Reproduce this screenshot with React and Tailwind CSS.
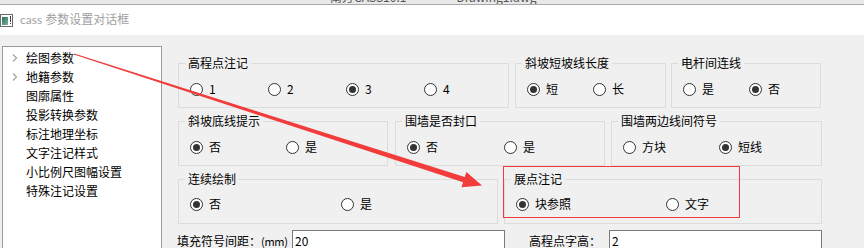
import React from 'react';

function Radio({ label, checked, width }) {
  return (
    <div className="flex items-center h-[16px] shrink-0" style={{ width }}>
      <span className="w-[13px] h-[13px] rounded-full border border-[#333] bg-white flex items-center justify-center shrink-0">
        {checked && <span className="w-[7px] h-[7px] rounded-full bg-[#333]" />}
      </span>
      <span className="ml-[6px] text-[12px] leading-[16px] text-black whitespace-nowrap">{label}</span>
    </div>
  );
}

function Group({ title, width, className = '', pt = 'pt-[10px]', items }) {
  return (
    <fieldset className={`h-[53px] border border-[#dcdcdc] shrink-0 ${className}`} style={{ width }}>
      <legend className="ml-[6px] px-[3px] text-[12px] leading-[16px] text-black">{title}</legend>
      <div className={`flex pl-[11px] ${pt}`}>
        {items.map(it => (
          <Radio key={it.label} {...it} />
        ))}
      </div>
    </fieldset>
  );
}

const treeItems = [
  { label: '绘图参数', arrow: true },
  { label: '地籍参数', arrow: true },
  { label: '图廓属性' },
  { label: '投影转换参数' },
  { label: '标注地理坐标' },
  { label: '文字注记样式' },
  { label: '小比例尺图幅设置' },
  { label: '特殊注记设置' },
];

export default function App() {
  return (
    <div className="relative w-[864px] h-[248px] overflow-hidden bg-[#f0f0f0] font-['Noto_Sans_CJK_SC',sans-serif]">
      {/* host window caption, mostly cut off */}
      <div className="h-[5px] bg-[#e8e8e8] border-b border-[#a8a8a8] overflow-hidden">
        <div className="-mt-[10px] pl-[330px] text-[12px] leading-[14px] text-[#555] whitespace-nowrap">
          南方CASS10.1<span className="ml-[50px]">Drawing1.dwg</span>
        </div>
      </div>

      {/* dialog title bar */}
      <div className="h-[30px] bg-white flex items-center">
        <svg width="13" height="13" viewBox="0 0 13 13" className="shrink-0">
          <defs>
            <linearGradient id="ic" x1="0" y1="0" x2="1" y2="1">
              <stop offset="0" stopColor="#2f6f5a" />
              <stop offset="1" stopColor="#6fb7a4" />
            </linearGradient>
          </defs>
          <rect x="0.5" y="0.5" width="12" height="12" fill="#fff" stroke="#6b6b6b" />
          <rect x="2" y="3" width="6" height="8" fill="url(#ic)" />
          <rect x="10" y="2" width="1" height="6" fill="#444" />
          <rect x="10" y="9" width="1" height="1" fill="#444" />
        </svg>
        <span className="ml-[7px] text-[12px] text-[#a0a0a0] font-['Lato','Noto_Sans_CJK_SC',sans-serif]">
          cass 参数设置对话框
        </span>
      </div>

      {/* dialog body */}
      <div className="flex">
        <div className="ml-[2px] mt-[11px] w-[160px] h-[220px] bg-white border border-[#9a9a9a] pt-[1px] shrink-0">
          {treeItems.map(item => (
            <div key={item.label} className="flex items-center h-[19px]">
              <span className="w-[23px] flex justify-center shrink-0">
                {item.arrow && (
                  <svg width="6" height="8" viewBox="0 0 6 8">
                    <path d="M1 0.5 L4.5 4 L1 7.5" fill="none" stroke="#a6a6a6" strokeWidth="1.3" />
                  </svg>
                )}
              </span>
              <span className="text-[12px] leading-[16px] text-black whitespace-nowrap">{item.label}</span>
            </div>
          ))}
        </div>

        <div className="ml-[16px] mt-[20px] flex flex-col gap-[5px]">
          <div className="flex">
            <Group title="高程点注记" width={331} items={[
              { label: '1', width: 78 }, { label: '2', width: 78 },
              { label: '3', width: 78, checked: true }, { label: '4', width: 78 },
            ]} />
            <Group title="斜坡短坡线长度" width={151} className="ml-[6px]" items={[
              { label: '短', width: 66, checked: true }, { label: '长', width: 66 },
            ]} />
            <Group title="电杆间连线" width={150} className="ml-[5px]" items={[
              { label: '是', width: 66 }, { label: '否', width: 66, checked: true },
            ]} />
          </div>
          <div className="flex">
            <Group title="斜坡底线提示" width={210} items={[
              { label: '否', width: 96, checked: true }, { label: '是', width: 96 },
            ]} />
            <Group title="围墙是否封口" width={210} className="ml-[7px]" items={[
              { label: '否', width: 97, checked: true }, { label: '是', width: 97 },
            ]} />
            <Group title="围墙两边线间符号" width={211} className="ml-[6px]" items={[
              { label: '方块', width: 96 }, { label: '短线', width: 96, checked: true },
            ]} />
          </div>
          <div className="flex">
            <Group title="连续绘制" width={320} pt="pt-[9px]" items={[
              { label: '否', width: 151, checked: true }, { label: '是', width: 151 },
            ]} />
            <Group title="展点注记" width={318} className="ml-[6px]" pt="pt-[9px]" items={[
              { label: '块参照', width: 150, checked: true }, { label: '文字', width: 150 },
            ]} />
          </div>
          <div className="flex items-start mt-[1px] -ml-[1px]">
            <span className="w-[115px] shrink-0 pt-[3px] text-[12px] leading-[16px] text-black whitespace-nowrap">
              填充符号间距：<span className="text-[11px] tracking-[-0.3px]">(mm)</span>
            </span>
            <div className="w-[213px] shrink-0 h-[21px] bg-white border border-[#7a7a7a] pl-[2px] text-[12px] leading-[19px] text-black">20</div>
            <span className="ml-[24px] w-[80px] shrink-0 pt-[3px] text-[12px] leading-[16px] text-black whitespace-nowrap">高程点字高：</span>
            <div className="w-[213px] shrink-0 h-[21px] bg-white border border-[#7a7a7a] pl-[2px] text-[12px] leading-[19px] text-black">2</div>
          </div>
        </div>
      </div>

      {/* annotation: highlight box */}
      <div className="absolute left-[503px] top-[166px] w-[237px] h-[52px] border border-[#f23c3c] pointer-events-none" />

      {/* annotation: arrow */}
      <svg className="absolute left-0 top-0 pointer-events-none" width="864" height="248">
        <polygon
          fill="#f23c3c"
          points="74.2,53.5 464.7,176.9 466.4,172.0 482,185.4 461.4,187.2 463.1,182.3 73.8,54.5"
        />
      </svg>
    </div>
  );
}
